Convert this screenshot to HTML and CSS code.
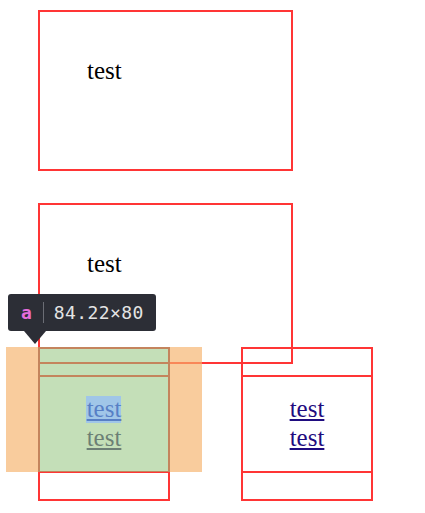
FILE: index.html
```html
<!DOCTYPE html>
<html>
<head>
<meta charset="utf-8">
<link rel="stylesheet" href="styles.css">
</head>
<body>
<div class="page">
  <div class="box">test</div>
  <div class="box">test</div>
  <div class="row">
    <div class="col">
      <div class="strip-top"></div>
      <div class="mid mid-hl">
        <a class="lnk first" href="#">test</a>
        <a class="lnk second" href="#">test</a>
      </div>
      <div class="strip-bottom"></div>
    </div>
    <div class="col">
      <div class="strip-top"></div>
      <div class="mid">
        <a class="lnk" href="#">test</a>
        <a class="lnk" href="#">test</a>
      </div>
      <div class="strip-bottom"></div>
    </div>
  </div>

  <div class="hl-margin"><div class="hl-pad"></div></div>

  <div class="tip">
    <span class="tip-tag">a</span>
    <span class="tip-sep"></span>
    <span class="tip-size">84.22×80</span>
  </div>
</div>
</body>
</html>
```

FILE: styles.css
```css
html, body {
  margin: 0;
  padding: 0;
  background: #fff;
}

.page {
  position: relative;
  padding: 10px 0 0 38px;
  width: 425px;
  height: 513px;
  box-sizing: border-box;
  font-family: "Liberation Serif", "Times New Roman", serif;
  font-size: 25px;
  color: #000;
}

.box {
  box-sizing: border-box;
  width: 255px;
  height: 161px;
  border: 2px solid #ff3535;
  padding: 45px 0 0 47px;
  margin-bottom: 32px;
}

.row {
  display: flex;
  gap: 71px;
  margin-top: -49px;
}

.col {
  box-sizing: border-box;
  width: 132px;
  height: 154px;
  border: 2px solid #ff3535;
  display: flex;
  flex-direction: column;
}

.strip-top {
  height: 26px;
  border-bottom: 2px solid #ff3535;
}

.mid {
  height: 96px;
  border-bottom: 2px solid #ff3535;
  padding-top: 18px;
  box-sizing: border-box;
  display: flex;
  flex-direction: column;
  align-items: center;
}

.strip-bottom {
  height: 24px;
}

.lnk {
  color: #1f0c80;
  text-decoration: underline;
  line-height: 28.6px;
}

.mid-hl .first {
  color: #2b2f9a;
}

.mid-hl .second {
  color: #3c2c6c;
}

/* devtools highlight overlay */
.hl-margin {
  position: absolute;
  left: 6px;
  top: 347px;
  width: 132px;
  height: 125px;
  border-left: 32px solid rgba(246, 178, 107, 0.66);
  border-right: 32px solid rgba(246, 178, 107, 0.66);
}

.hl-pad {
  width: 35px;
  height: 27px;
  border-style: solid;
  border-color: rgba(147, 196, 125, 0.55);
  border-width: 49px 49px 49px 48px;
  background: rgba(111, 168, 220, 0.66);
  background-clip: content-box;
}

.tip {
  position: absolute;
  left: 8px;
  top: 294px;
  width: 148px;
  height: 37px;
  box-sizing: border-box;
  background: #2c2e36;
  border-radius: 3px;
  display: flex;
  align-items: center;
  padding-left: 13px;
  font-family: "DejaVu Sans Mono", monospace;
  font-size: 18px;
}

.tip::after {
  content: "";
  position: absolute;
  left: 16px;
  top: 37px;
  border-left: 11px solid transparent;
  border-right: 11px solid transparent;
  border-top: 13px solid #2c2e36;
}

.tip-tag {
  color: #e56ddc;
  font-weight: bold;
}

.tip-sep {
  width: 1px;
  height: 21px;
  background: #6b6d75;
  margin: 0 10px 0 11px;
}

.tip-size {
  color: #e4e4e4;
  letter-spacing: 0.4px;
}
```
